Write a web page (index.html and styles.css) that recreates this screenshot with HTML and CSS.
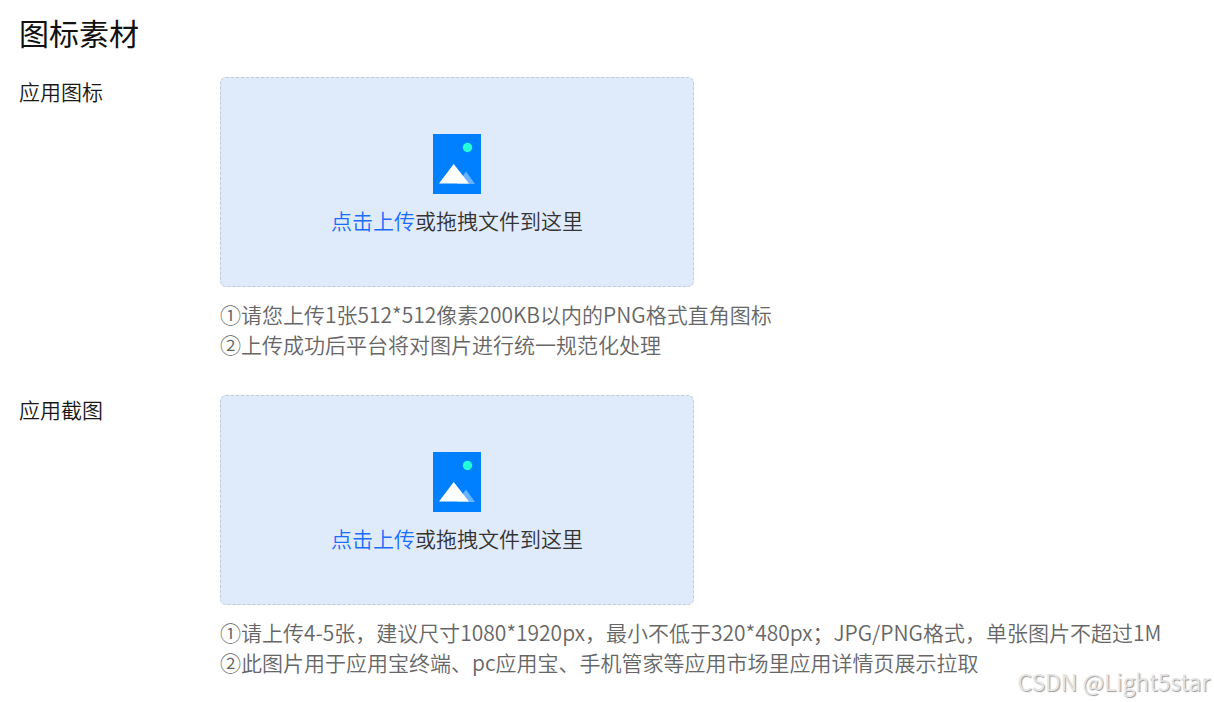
FILE: index.html
```html
<!DOCTYPE html>
<html lang="zh-CN">
<head>
<meta charset="utf-8">
<title>图标素材</title>
<link rel="stylesheet" href="styles.css">
</head>
<body>
<main class="page">
  <h1 class="title">图标素材</h1>
  <section class="row" aria-labelledby="icon-label">
    <h2 class="label" id="icon-label">应用图标</h2>
    <div class="field">
      <div class="dropzone">
        <svg class="picture" viewBox="0 0 48 60" aria-hidden="true">
          <path fill="#0080ff" d="M0 0h48v60H0z"/>
          <circle cx="34.5" cy="13.5" r="4.7" fill="#22ffd6"/>
          <path fill="#66b3ff" d="M33 37.5 42 50H24z"/>
          <path fill="#fff" d="M20.7 30 36 49.5H6z"/>
        </svg>
        <p class="prompt"><button class="upload" type="button">点击上传</button>或拖拽文件到这里</p>
      </div>
      <p class="hint">①请您上传1张512*512像素200KB以内的PNG格式直角图标<br>②上传成功后平台将对图片进行统一规范化处理</p>
    </div>
  </section>
  <section class="row" aria-labelledby="shot-label">
    <h2 class="label" id="shot-label">应用截图</h2>
    <div class="field">
      <div class="dropzone">
        <svg class="picture" viewBox="0 0 48 60" aria-hidden="true">
          <path fill="#0080ff" d="M0 0h48v60H0z"/>
          <circle cx="34.5" cy="13.5" r="4.7" fill="#22ffd6"/>
          <path fill="#66b3ff" d="M33 37.5 42 50H24z"/>
          <path fill="#fff" d="M20.7 30 36 49.5H6z"/>
        </svg>
        <p class="prompt"><button class="upload" type="button">点击上传</button>或拖拽文件到这里</p>
      </div>
      <p class="hint">①请上传4-5张，建议尺寸1080*1920px，最小不低于320*480px；JPG/PNG格式，单张图片不超过1M<br>②此图片用于应用宝终端、pc应用宝、手机管家等应用市场里应用详情页展示拉取</p>
    </div>
  </section>
</main>
<div class="watermark">CSDN @Light5star</div>
</body>
</html>
```
FILE: styles.css
```css
* {
  box-sizing: border-box;
}

body {
  margin: 0;
  background: #fff;
  color: #181818;
  font: 350 21px/30px "Noto Sans CJK SC", sans-serif;
}

.page {
  display: flex;
  flex-direction: column;
  gap: 36px;
  padding: 10px 20px 24px 19px;
}

.title {
  margin: 0 0 -13px;
  font-size: 30px;
  line-height: 44px;
  font-weight: 400;
  color: #111;
}

.row {
  display: flex;
}

.label {
  flex: 0 0 201px;
  margin: 0;
  font-size: 21px;
  line-height: 28px;
  font-weight: 350;
}

.field {
  flex: 1;
  min-width: 0;
}

.dropzone {
  display: flex;
  flex-direction: column;
  align-items: center;
  gap: 11px;
  max-width: 474px;
  padding: 56px 20px 51px;
  border: 1px dashed #c0cadb;
  border-radius: 6px;
  background: #dfeafb;
}

.picture {
  width: 48px;
  height: 60px;
}

.prompt {
  margin: 0;
  color: #333;
}

.upload {
  padding: 0;
  border: 0;
  background: none;
  color: #1a6dff;
  font: inherit;
  cursor: pointer;
}

.hint {
  margin: 12px 0 0;
  color: #666;
}

.watermark {
  position: absolute;
  right: 4px;
  bottom: 6px;
  color: #e6e6e6;
  font: 350 23px/30px "Noto Sans CJK SC", sans-serif;
  text-shadow: 1px 1px 1px #999;
}
```
